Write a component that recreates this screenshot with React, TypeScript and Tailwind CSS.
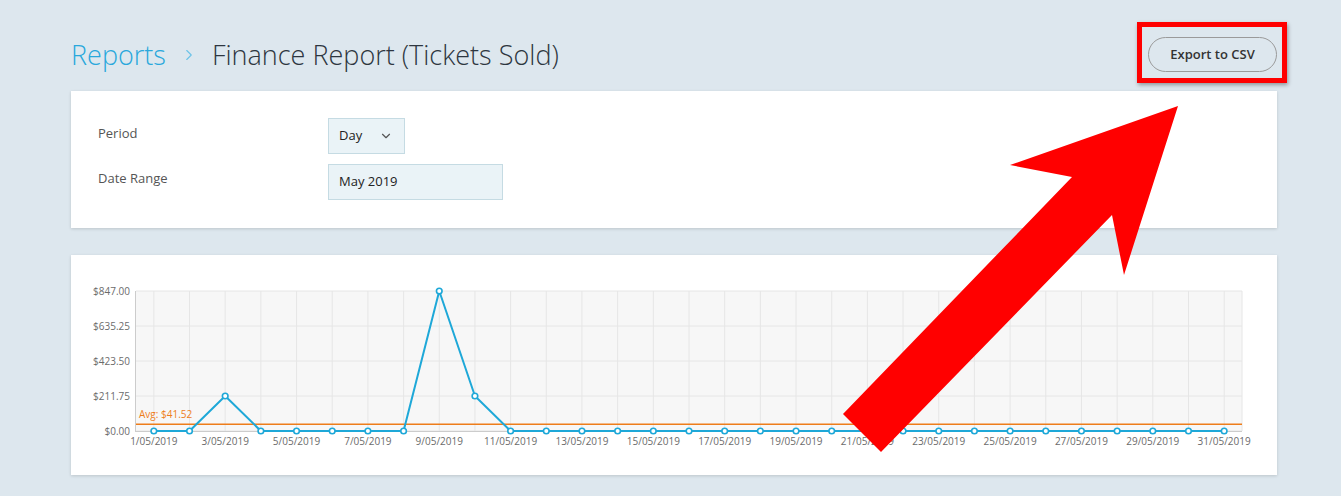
import { ChevronDown, ChevronRight } from "lucide-react";

const values = [
  0, 0, 211.75, 0, 0, 0, 0, 0, 847, 211.75, 0, 0, 0, 0, 0, 0, 0, 0, 0, 0, 0, 0, 0, 0, 0, 0, 0, 0, 0, 0, 0,
];

const plotLeft = 65;
const plotRight = 1171;
const plotTop = 36;
const plotBottom = 176;
const maxValue = 847;
const band = (plotRight - plotLeft) / values.length;

const px = (i: number) => plotLeft + band * (i + 0.5);
const py = (v: number) => plotBottom - (v / maxValue) * (plotBottom - plotTop);

const yTicks = [
  { v: 847, label: "$847.00" },
  { v: 635.25, label: "$635.25" },
  { v: 423.5, label: "$423.50" },
  { v: 211.75, label: "$211.75" },
  { v: 0, label: "$0.00" },
];

const FinanceChart = () => {
  const avg = 41.52;
  const line = values.map((v, i) => `${px(i)},${py(v)}`).join(" ");

  return (
    <svg width="1206" height="220" viewBox="0 0 1206 220" className="block">
      <rect x={plotLeft} y={plotTop} width={plotRight - plotLeft} height={plotBottom - plotTop} fill="#f7f7f7" />
      {yTicks.map((t) => (
        <line key={t.label} x1={plotLeft} x2={plotRight} y1={py(t.v)} y2={py(t.v)} stroke="#e6e6e6" strokeWidth="1" />
      ))}
      {values.map((_, i) => (
        <line key={i} x1={px(i)} x2={px(i)} y1={plotTop} y2={plotBottom} stroke="#e6e6e6" strokeWidth="1" />
      ))}
      <line x1={plotRight} x2={plotRight} y1={plotTop} y2={plotBottom} stroke="#e6e6e6" strokeWidth="1" />
      <line x1={plotLeft - 0.5} x2={plotLeft - 0.5} y1={plotTop} y2={plotBottom + 1} stroke="#cccccc" strokeWidth="1" />
      <line x1={plotLeft} x2={plotRight} y1={plotBottom + 0.5} y2={plotBottom + 0.5} stroke="#cccccc" strokeWidth="1" />

      {yTicks.map((t) => (
        <text
          key={t.label}
          x={59}
          y={py(t.v) + 3.5}
          textAnchor="end"
          fontSize="10"
          fill="#6b6b6b"
          fontFamily="'Open Sans', sans-serif"
        >
          {t.label}
        </text>
      ))}

      {values.map((_, i) =>
        i % 2 === 0 ? (
          <text
            key={i}
            x={px(i)}
            y={190}
            textAnchor="middle"
            fontSize="10"
            fill="#6b6b6b"
            fontFamily="'Open Sans', sans-serif"
          >
            {`${i + 1}/05/2019`}
          </text>
        ) : null
      )}

      <line x1={plotLeft} x2={plotRight} y1={py(avg)} y2={py(avg)} stroke="#ee7d1a" strokeWidth="1.5" />
      <text x={68} y={162.5} fontSize="10" fill="#ee7d1a" fontFamily="'Open Sans', sans-serif">
        Avg: $41.52
      </text>

      <polyline points={line} fill="none" stroke="#1ea8d8" strokeWidth="2" strokeLinejoin="round" />
      {values.map((v, i) => (
        <circle key={i} cx={px(i)} cy={py(v)} r="2.8" fill="#ffffff" stroke="#1ea8d8" strokeWidth="1.6" />
      ))}
    </svg>
  );
};

const App = () => {
  return (
    <div
      className="relative min-h-[496px] bg-[#dde7ee] pl-[71px] pr-[64px] pt-[37px] pb-[21px]"
      style={{ fontFamily: "'Open Sans', 'Noto Sans', sans-serif" }}
    >
      <div className="flex h-[35px] items-center justify-between">
        <h1 className="flex items-center text-[27px] font-light leading-[35px] text-[#2d3640]">
          <span className="text-[#29a8dc]">Reports</span>
          <ChevronRight className="mx-[14px] h-[18px] w-[18px] text-[#6cc3e8]" strokeWidth={1.5} />
          <span>Finance Report (Tickets Sold)</span>
        </h1>
        <button
          type="button"
          className="h-[35px] w-[129px] rounded-full border border-[#9a9a9a] text-[13px] font-semibold text-[#333]"
        >
          Export to CSV
        </button>
      </div>

      <div className="mt-[19px] bg-white pl-[27px] pt-[27px] pb-[28px] shadow-[0_1px_3px_rgba(0,0,0,0.15)]">
        <div className="flex">
          <div className="w-[230px] pt-[6px] text-[13px] text-[#555]">Period</div>
          <div className="flex h-[36px] w-[77px] items-center justify-between border border-[#c5dbe3] bg-[#eaf3f7] pl-[10px] pr-[11px] text-[13px] text-[#222]">
            <span>Day</span>
            <ChevronDown className="h-[14px] w-[14px] text-[#555]" strokeWidth={2} />
          </div>
        </div>
        <div className="mt-[10px] flex">
          <div className="w-[230px] pt-[5px] text-[13px] text-[#555]">Date Range</div>
          <div className="flex h-[36px] w-[175px] items-center border border-[#c5dbe3] bg-[#eaf3f7] pl-[10px] text-[13px] text-[#222]">
            May 2019
          </div>
        </div>
      </div>

      <div className="mt-[27px] h-[220px] bg-white shadow-[0_1px_3px_rgba(0,0,0,0.15)]">
        <FinanceChart />
      </div>

      {/* annotation overlay */}
      <div className="pointer-events-none absolute left-[1137px] top-[22px] h-[61px] w-[150px] border-[5px] border-[#ff0000] shadow-[1px_2px_4px_rgba(0,0,0,0.35)]" />
      <svg className="pointer-events-none absolute left-0 top-0" width="1341" height="496">
        <polygon
          points="1178,106 1124,275 1112,215 881,452 843,414 1072,177 1010,165"
          fill="#ff0000"
        />
      </svg>
    </div>
  );
};

export default App;
